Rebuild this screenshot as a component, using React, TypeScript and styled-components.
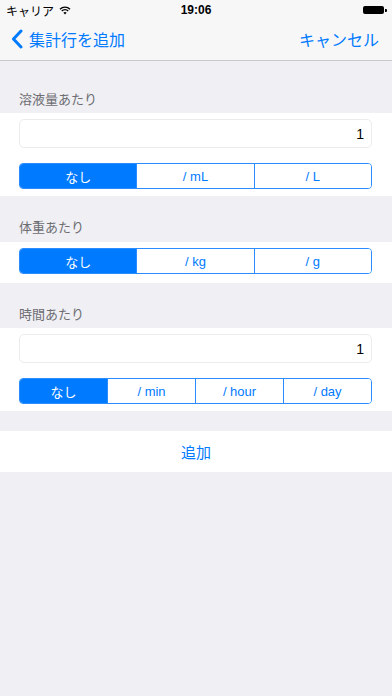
import React from 'react'
import { styled, createGlobalStyle } from 'styled-components'

const GlobalStyle = createGlobalStyle`
  html, body {
    margin: 0;
    padding: 0;
    background: #efeff4;
    font-family: "Noto Sans CJK JP", "Liberation Sans", sans-serif;
  }
  * { box-sizing: border-box; }
`

const BLUE = '#007aff'

const Screen = styled.div`
  width: 392px;
  height: 696px;
  background: #efeff4;
  display: flex;
  flex-direction: column;
`

const Header = styled.div`
  background: #f7f7f8;
  border-bottom: 1px solid #c8c7cc;
  height: 61px;
  display: flex;
  flex-direction: column;
`

const StatusBar = styled.div`
  height: 20px;
  display: flex;
  align-items: center;
  padding: 0 5px 0 6px;
  font-size: 12px;
  color: #000;
  position: relative;
`

const Carrier = styled.div`
  display: flex;
  align-items: center;
  gap: 5px;
  flex: 1;
`

const Time = styled.div`
  position: absolute;
  left: 0;
  right: 0;
  text-align: center;
  font-family: "Liberation Sans", sans-serif;
  font-weight: bold;
  font-size: 12px;
`

const Battery = styled.div`
  width: 21px;
  height: 8px;
  background: #000;
  border-radius: 2px;
  position: relative;
  margin-right: 3px;
  &::after {
    content: '';
    position: absolute;
    right: -3px;
    top: 2.5px;
    width: 2px;
    height: 3px;
    background: #000;
    border-radius: 0 1px 1px 0;
  }
`

const NavBar = styled.div`
  flex: 1;
  display: flex;
  align-items: center;
  justify-content: space-between;
  padding: 0 13px 2px 11px;
  color: ${BLUE};
  font-size: 16px;
`

const NavBack = styled.div`
  display: flex;
  align-items: center;
  gap: 6px;
`

const SectionTitle = styled.div<{ $top: number; $bottom: number }>`
  padding: ${p => p.$top}px 19px ${p => p.$bottom}px;
  font-size: 13px;
  color: #6d6d72;
  line-height: 16px;
`

const Group = styled.div<{ $bottom?: number }>`
  background: #fff;
  padding: 6px 20px ${p => p.$bottom ?? 7}px 19px;
  display: flex;
  flex-direction: column;
  gap: 15px;
`

const Field = styled.div`
  height: 29px;
  border: 1px solid #ececec;
  border-radius: 5px;
  display: flex;
  align-items: center;
  justify-content: flex-end;
  padding: 0 7px;
  font-family: "Liberation Sans", sans-serif;
  font-size: 14px;
  color: #000;
`

const Segments = styled.div`
  display: flex;
  height: 26px;
  border: 1px solid #2a8cff;
  border-radius: 4px;
  overflow: hidden;
`

const Segment = styled.div<{ $active?: boolean }>`
  flex: 1;
  display: flex;
  align-items: center;
  justify-content: center;
  font-size: 13px;
  font-family: "Liberation Sans", "Noto Sans CJK JP", sans-serif;
  color: ${p => (p.$active ? '#fff' : BLUE)};
  background: ${p => (p.$active ? BLUE : '#fff')};
  & + & {
    border-left: 1px solid #2a8cff;
  }
`

const AddButton = styled.div`
  margin-top: 20px;
  background: #fff;
  height: 41px;
  display: flex;
  align-items: center;
  justify-content: center;
  color: ${BLUE};
  font-size: 15px;
`

const Wifi = () => (
  <svg width="12" height="9" viewBox="0 0 12 9">
    <path d="M1 3.2 A7 7 0 0 1 11 3.2" stroke="#000" strokeWidth="1.4" fill="none" />
    <path d="M2.8 5 A4.5 4.5 0 0 1 9.2 5" stroke="#000" strokeWidth="1.4" fill="none" />
    <path d="M6 8.6 L4.4 6.7 A2.3 2.3 0 0 1 7.6 6.7 Z" fill="#000" />
  </svg>
)

const Chevron = () => (
  <svg width="12" height="20" viewBox="0 0 12 20">
    <path d="M10 2 L2.5 10 L10 18" stroke={BLUE} strokeWidth="3" fill="none" strokeLinecap="round" strokeLinejoin="round" />
  </svg>
)

type SegProps = { items: string[] }

const SegmentControl = ({ items }: SegProps) => (
  <Segments>
    {items.map((it, i) => (
      <Segment key={it} $active={i === 0}>{it}</Segment>
    ))}
  </Segments>
)

const App = () => {
  return (
    <Screen>
      <GlobalStyle />
      <Header>
        <StatusBar>
          <Carrier>キャリア <Wifi /></Carrier>
          <Time>19:06</Time>
          <Battery />
        </StatusBar>
        <NavBar>
          <NavBack><Chevron />集計行を追加</NavBack>
          <div>キャンセル</div>
        </NavBar>
      </Header>

      <SectionTitle $top={30} $bottom={6}>溶液量あたり</SectionTitle>
      <Group>
        <Field>1</Field>
        <SegmentControl items={['なし', '/ mL', '/ L']} />
      </Group>

      <SectionTitle $top={23} $bottom={7}>体重あたり</SectionTitle>
      <Group $bottom={9}>
        <SegmentControl items={['なし', '/ kg', '/ g']} />
      </Group>

      <SectionTitle $top={23} $bottom={6}>時間あたり</SectionTitle>
      <Group>
        <Field>1</Field>
        <SegmentControl items={['なし', '/ min', '/ hour', '/ day']} />
      </Group>

      <AddButton>追加</AddButton>
    </Screen>
  )
}

export default App
